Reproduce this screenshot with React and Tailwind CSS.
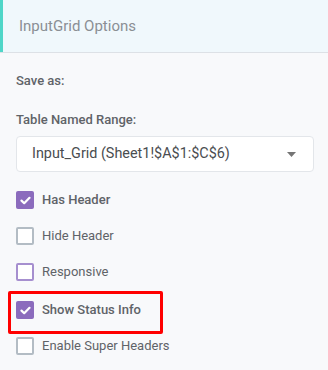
import React from 'react';

const font = { fontFamily: 'Roboto, "Liberation Sans", sans-serif' };

const Check = ({ checked, tone = 'gray' }) => {
  if (checked) {
    return (
      <span className="flex h-[18px] w-[18px] shrink-0 items-center justify-center rounded-[2px] bg-[#8b6bbd]">
        <svg width="11" height="9" viewBox="0 0 11 9" fill="none">
          <path d="M1.5 4.6 L4.2 7.2 L9.5 1.8" stroke="white" strokeWidth="2.2" strokeLinecap="round" strokeLinejoin="round" />
        </svg>
      </span>
    );
  }
  return (
    <span
      className={`h-[18px] w-[18px] shrink-0 rounded-[2px] border-2 bg-white ${
        tone === 'purple' ? 'border-[#a68fcf]' : 'border-[#b3bcc4]'
      }`}
    />
  );
};

const Option = ({ label, checked, bold, tone }) => (
  <div className="flex h-[36px] items-center gap-[8px]">
    <Check checked={checked} tone={tone} />
    <span className={`text-[13px] text-[#5f6368] ${bold ? 'font-medium' : ''}`}>{label}</span>
  </div>
);

export default function App() {
  return (
    <div className="h-[370px] w-[328px] overflow-hidden bg-[#f8f9fb]" style={font}>
      {/* Header */}
      <div className="flex h-[53px] border-b border-[#dde1e6] bg-[#f0f8fc]">
        <div className="w-[3px] bg-[#4fd6c8]" />
        <div className="flex items-center pl-[16px] text-[15px] text-[#8a8f94]">InputGrid Options</div>
      </div>

      <div className="pl-[16px] pr-[14px]">
        <div className="pt-[18px] text-[13px] font-medium text-[#5f6368]">Save as:</div>

        <div className="pt-[19px] text-[13px] font-medium text-[#5f6368]">Table Named Range:</div>

        <div className="mt-[7px] flex h-[36px] items-center justify-between rounded-[4px] border border-[#e3e6ea] bg-white pl-[15px] pr-[17px]">
          <span className="text-[14.4px] text-[#4a4d50]">Input_Grid (Sheet1!$A$1:$C$6)</span>
          <svg width="9" height="5" viewBox="0 0 9 5">
            <path d="M0 0 L9 0 L4.5 5 Z" fill="#757575" />
          </svg>
        </div>

        <div className="mt-[10px] flex flex-col">
          <Option label="Has Header" checked bold />
          <Option label="Hide Header" />
          <Option label="Responsive" tone="purple" />
          <div className="relative">
            <div className="pointer-events-none absolute left-[-8px] top-[1px] h-[43px] w-[155px] rounded-[2px] border-[3px] border-[#ff0000]" />
            <div className="pt-[2px]">
              <Option label="Show Status Info" checked bold />
            </div>
          </div>
          <Option label="Enable Super Headers" />
        </div>
      </div>
    </div>
  );
}
